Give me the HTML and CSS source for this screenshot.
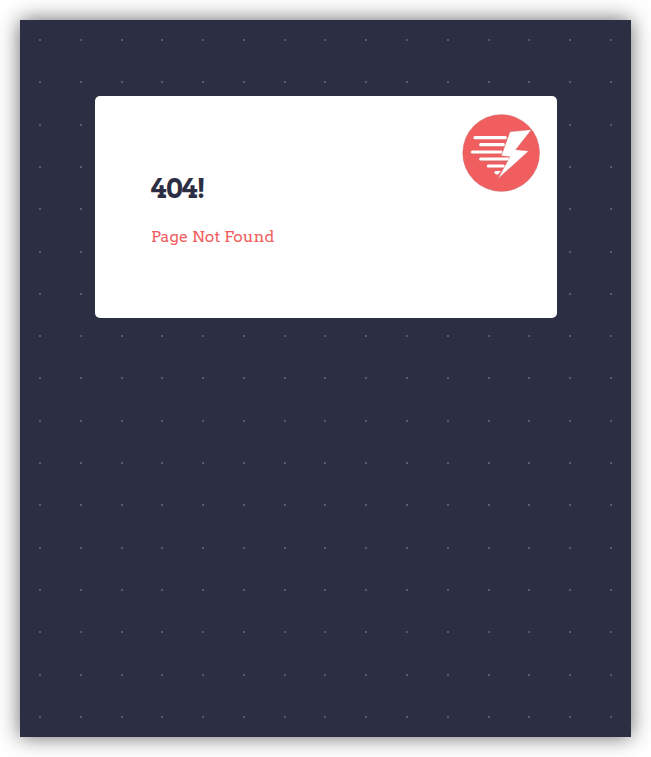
FILE: index.html
```html
<!DOCTYPE html>
<html lang="en">
<head>
<meta charset="utf-8">
<title>404! Page Not Found</title>
<link rel="stylesheet" href="styles.css">
</head>
<body>
<main class="page">
  <svg class="dots" width="611" height="717" viewBox="20 20 611 717" aria-hidden="true">
    <defs><path id="row" d="M39 0h2v2h-2zM80 0h2v2h-2zM121 0h2v2h-2zM161 0h2v2h-2zM202 0h2v2h-2zM243 0h2v2h-2zM284 0h2v2h-2zM324 0h2v2h-2zM365 0h2v2h-2zM406 0h2v2h-2zM447 0h2v2h-2zM488 0h2v2h-2zM528 0h2v2h-2zM569 0h2v2h-2zM610 0h2v2h-2z"/></defs>
    <use href="#row" y="39"/><use href="#row" y="81"/><use href="#row" y="124"/><use href="#row" y="166"/><use href="#row" y="208"/><use href="#row" y="251"/><use href="#row" y="293"/><use href="#row" y="335"/><use href="#row" y="377"/><use href="#row" y="420"/><use href="#row" y="462"/><use href="#row" y="504"/><use href="#row" y="547"/><use href="#row" y="589"/><use href="#row" y="631"/><use href="#row" y="674"/><use href="#row" y="716"/>
  </svg>
  <section class="card">
    <div class="message">
      <h1 class="title">404!</h1>
      <p class="detail">Page Not Found</p>
    </div>
    <svg class="logo" viewBox="21 27 234 234" aria-hidden="true">
      <circle class="logo-disc" cx="138.5" cy="144" r="115.5"/>
      <path class="logo-shadow" d="M60 101H153M77 122H147M52 144H141M77 166H166M100 186H147"/>
      <path class="logo-lines" d="M60 98H151M77 119H145M52 141H138M77 162H164M100 183H145"/>
      <path class="logo-fill" d="M122 198H138L128 209Q119 207 118 203Q118 198 122 198Z"/>
      <path class="logo-bolt" d="M165 80L229 74L182 134L221 138L129 221L165 155L139 152Z"/>
    </svg>
  </section>
</main>
</body>
</html>
```
FILE: styles.css
```css
* { box-sizing: border-box; }

body {
  margin: 0;
  padding: 20px;
  background: #fff;
  font-family: Arvo, "DejaVu Serif", serif;
}

.page {
  position: relative;
  height: 717px;
  padding: 76px 74px 0 75px;
  background: #2c2e43;
  box-shadow: 0 0 20px rgba(0, 0, 0, .6);
}

.dots {
  position: absolute;
  inset: 0;
  fill: #595b6b;
  shape-rendering: crispEdges;
}

.card {
  position: relative;
  display: flex;
  justify-content: space-between;
  height: 222px;
  padding: 18px 17px 0 56px;
  border-radius: 5px;
  background: #fff;
}

.message { padding-top: 59px; }

.title {
  margin: 0;
  color: #2c2e43;
  font-size: 26px;
  line-height: 32px;
  letter-spacing: -.6px;
}

.detail {
  margin: 22px 0 0;
  color: #f05f61;
  font-size: 16px;
  line-height: 20px;
  letter-spacing: .16px;
  white-space: nowrap;
}

.logo {
  width: 78px;
  height: 78px;
}

.logo-disc { fill: #f05e60; stroke: #b97b79; stroke-width: 1; }
.logo-lines, .logo-shadow { fill: none; stroke-width: 9.5; stroke-linecap: round; }
.logo-lines { stroke: #fff; }
.logo-shadow { stroke: #c76d69; stroke-opacity: .5; }
.logo-fill { fill: #fff; }
.logo-bolt { fill: #fff; stroke: #c87772; stroke-width: 1.2; }
```
